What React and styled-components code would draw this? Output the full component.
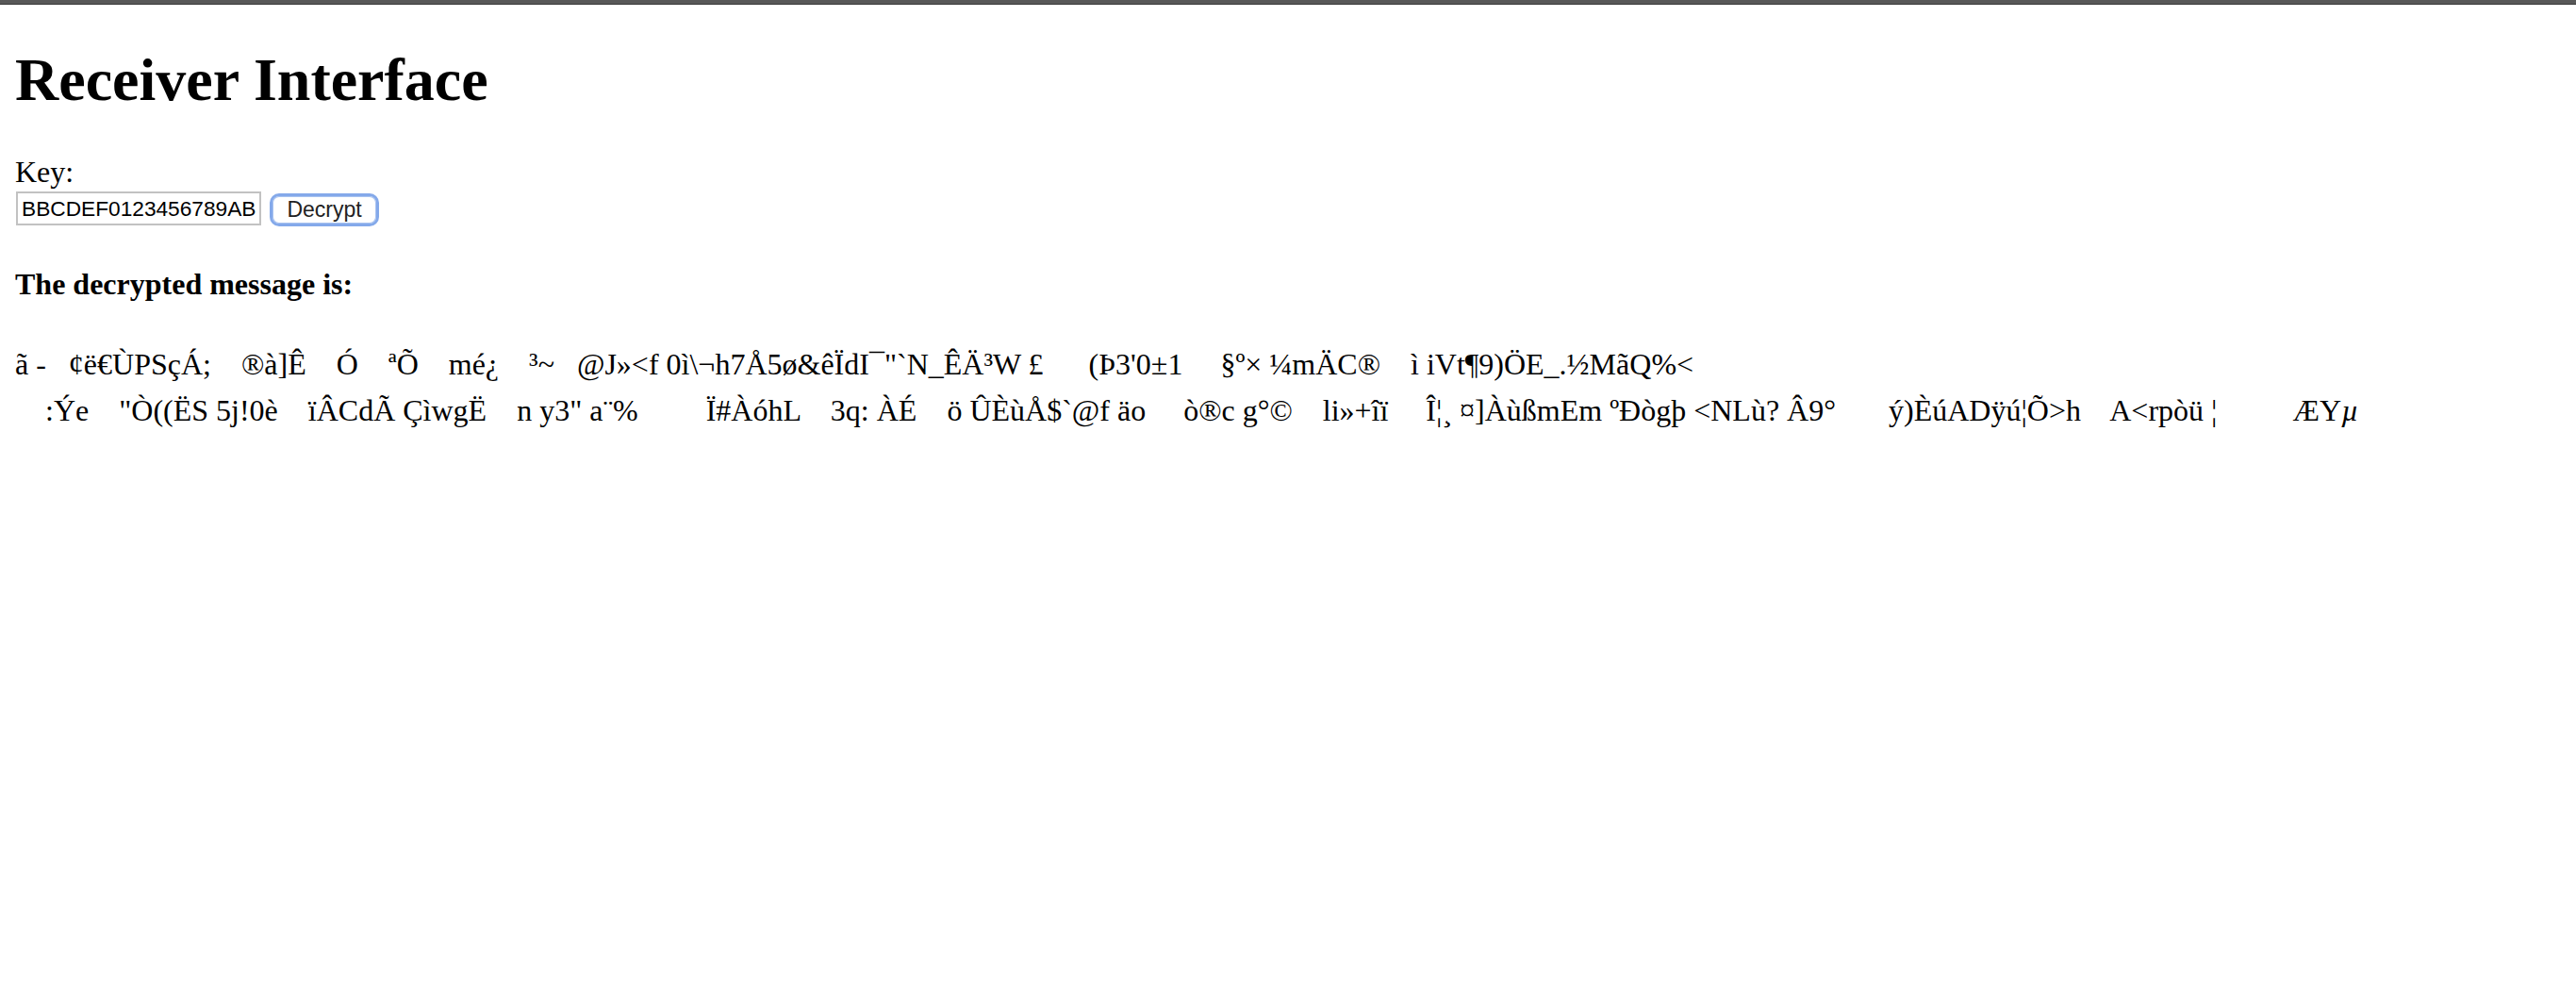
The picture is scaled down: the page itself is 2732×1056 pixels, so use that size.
import React, { useState } from 'react';
import styled, { createGlobalStyle } from 'styled-components';

const GlobalStyle = createGlobalStyle`
  html, body {
    margin: 0;
    background: #ffffff;
  }

  body {
    font-family: 'Liberation Serif', 'Times New Roman', serif;
    font-size: 32px;
    color: #000000;
  }
`;

const TopBar = styled.div`
  height: 4px;
  background: #585858;
  border-bottom: 1px solid #3a3a3a;
`;

const Page = styled.main`
  padding: 0 16px;
`;

const Title = styled.h1`
  font-size: 64px;
  font-weight: bold;
  line-height: 73.6px;
  margin: 42.88px 0;
`;

const Label = styled.label`
  display: block;
  line-height: 36.8px;
`;

const KeyRow = styled.div`
  display: flex;
  align-items: flex-start;
  gap: 9px;
  padding-top: 2px;
  padding-left: 1px;
`;

const KeyInput = styled.input`
  box-sizing: border-box;
  width: 260px;
  height: 36px;
  padding: 0 4px;
  border: 2px solid #c2c2c2;
  border-radius: 0;
  font-family: 'Liberation Sans', Arial, sans-serif;
  font-size: 22.7px;
  color: #000000;
  background: #ffffff;
  outline: none;
`;

const Button = styled.button`
  box-sizing: border-box;
  width: 116px;
  height: 35px;
  margin-top: 2px;
  padding: 0;
  border: 3px solid #84a9ea;
  border-radius: 10px;
  box-shadow: inset 0 0 0 1px #a9c3f0;
  background: #ffffff;
  font-family: 'Liberation Sans', Arial, sans-serif;
  font-size: 23px;
  color: #222222;
  cursor: pointer;
`;

const Subtitle = styled.h4`
  font-size: 32px;
  font-weight: bold;
  line-height: 36.8px;
  margin: 42.56px 0;
`;

const Message = styled.p`
  margin: 32px 0;
  line-height: 49px;
  white-space: pre;
`;

// the micro sign comes out of a fallback font in the original, slanted
const Fallback = styled.span`
  font-style: italic;
`;

const sp = (n) => ' '.repeat(n);

const lineOne = [
  'ã -', sp(3), '¢ë€ÙPSçÁ;', sp(4), '®à]Ê', sp(4), 'Ó', sp(4), 'ªÕ', sp(4),
  'mé¿', sp(4), '³~', sp(3), '@J»<f', sp(1), '0ì\\¬h7Å5ø&êÏdI¯"`N_ÊÄ³W £',
  sp(6), "(Þ3'0±1", sp(5), '§º× ¼mÄC®', sp(4), 'ì iVt¶9)ÖE_.½MãQ%<',
].join('');

const lineTwo = [
  sp(4), ':Ýe', sp(4), '"Ò((ËS 5j!0è', sp(4), 'ïÂCdÃ ÇìwgË', sp(4),
  'n y3" a¨%', sp(9), 'Ï#ÀóhL', sp(4), '3q: ÀÉ', sp(4), 'ö ÛÈùÅ$`@f äo',
  sp(5), 'ò®c g°©', sp(4), 'li»+îï', sp(5), 'Î¦¸ ¤]ÀùßmEm ºÐògþ <NLù? Â9°',
  sp(7), 'ý)ÈúADÿú¦Õ>h', sp(4), 'A<rpòü ¦', sp(10), 'ÆY',
].join('');

const App = () => {
  const [key, setKey] = useState('BBCDEF0123456789AB');

  return (
    <React.Fragment>
      <GlobalStyle />
      <TopBar />
      <Page>
        <Title>Receiver Interface</Title>
        <Label htmlFor="key">Key:</Label>
        <KeyRow>
          <KeyInput
            id="key"
            type="text"
            value={key}
            onChange={(e) => setKey(e.target.value)}
          />
          <Button type="button">Decrypt</Button>
        </KeyRow>
        <Subtitle>The decrypted message is:</Subtitle>
        <Message>
          {lineOne}
          {'\n'}
          {lineTwo}
          <Fallback>µ</Fallback>
        </Message>
      </Page>
    </React.Fragment>
  );
};

export default App;
